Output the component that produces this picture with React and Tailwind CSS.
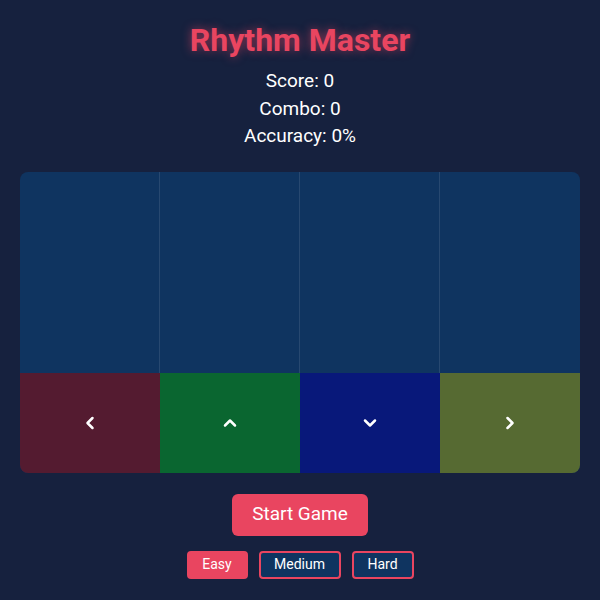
import React from "react";
import { ChevronLeft, ChevronUp, ChevronDown, ChevronRight } from "lucide-react";

export default function App() {
  const lanes = [
    { bg: "bg-[#541b30]", Icon: ChevronLeft },
    { bg: "bg-[#0a6630]", Icon: ChevronUp },
    { bg: "bg-[#08187a]", Icon: ChevronDown },
    { bg: "bg-[#566a32]", Icon: ChevronRight },
  ];
  return (
    <div className="w-[600px] h-[600px] bg-[#16213e] text-white flex flex-col items-center px-5 pt-[21px]" style={{ fontFamily: "Roboto, 'Liberation Sans', sans-serif" }}>
      <h1 className="text-[32px] leading-[38px] font-bold text-[#e94560] [text-shadow:0_0_10px_rgba(233,69,96,0.6)]">Rhythm Master</h1>
      <div className="mt-[8px] flex flex-col items-center text-[19px] leading-[27.5px]">
        <div>Score: 0</div>
        <div>Combo: 0</div>
        <div>Accuracy: 0%</div>
      </div>
      <div className="mt-[22px] w-[560px] h-[301px] bg-[#0f3460] rounded-lg overflow-hidden flex">
        {lanes.map(({ bg, Icon }, i) => (
          <div key={i} className="flex-1 flex flex-col">
            <div className={`h-[201px] ${i < 3 ? "border-r border-white/10" : ""}`} />
            <div className={`h-[100px] ${bg} flex items-center justify-center`}>
              <Icon size={20} strokeWidth={3} color="white" />
            </div>
          </div>
        ))}
      </div>
      <button className="mt-[21px] w-[136px] h-[42px] bg-[#e94560] rounded-md text-[19px] text-white">Start Game</button>
      <div className="mt-[15px] flex gap-[11px]">
        <button className="w-[61px] h-[28px] bg-[#e94560] rounded text-[14px] border-2 border-[#e94560]">Easy</button>
        <button className="w-[82px] h-[28px] bg-[#0f3460] rounded text-[14px] border-2 border-[#e94560]">Medium</button>
        <button className="w-[62px] h-[28px] bg-[#0f3460] rounded text-[14px] border-2 border-[#e94560]">Hard</button>
      </div>
    </div>
  );
}
